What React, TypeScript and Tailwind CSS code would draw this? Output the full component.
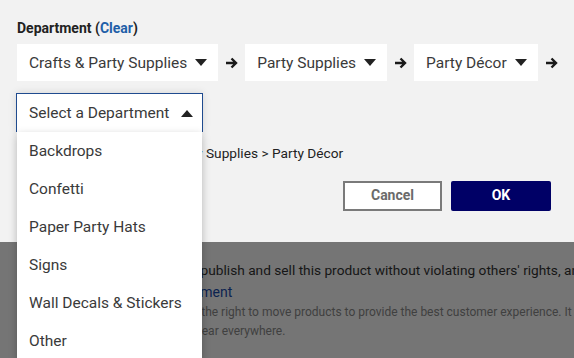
const rowSelects = ["Crafts & Party Supplies", "Party Supplies", "Party Décor"];

const options = [
  "Backdrops",
  "Confetti",
  "Paper Party Hats",
  "Signs",
  "Wall Decals & Stickers",
  "Other",
];

function Caret({ up = false }: { up?: boolean }) {
  return (
    <svg width="12" height="7" viewBox="0 0 12 7" className="shrink-0">
      {up ? (
        <path d="M0 7 L6 0 L12 7 Z" fill="#222" />
      ) : (
        <path d="M0 0 L12 0 L6 7 Z" fill="#222" />
      )}
    </svg>
  );
}

function Arrow() {
  return (
    <svg width="13" height="12" viewBox="0 0 13 12" className="shrink-0">
      <path
        d="M1 6 H11 M6.5 1.5 L11 6 L6.5 10.5"
        stroke="#1a1a1a"
        strokeWidth="2.4"
        fill="none"
      />
    </svg>
  );
}

export default function App() {
  return (
    <div className="relative h-[358px] w-[574px] overflow-hidden bg-[#757575] font-['Roboto',sans-serif]">
      <div className="h-[242px] bg-[#f2f2f2] px-[17px] pt-[19px]">
        <p className="text-[14px] font-bold leading-[18px] text-[#222]">
          Department (<span className="text-[#1f5fa8]">Clear</span>)
        </p>

        <div className="mt-[7px] flex items-center gap-[7px]">
          {rowSelects.map((label) => (
            <div key={label} className="flex items-center gap-[7px]">
              <div className="flex h-[37px] items-center gap-[8px] bg-white pl-[12px] pr-[11px] text-[15.5px] text-[#3a3a3a]">
                <span className="whitespace-nowrap pt-[2px]">{label}</span>
                <Caret />
              </div>
              <Arrow />
            </div>
          ))}
        </div>

        <div className="relative mt-[12px] w-[187px] -ml-px">
          <div className="flex h-[39px] items-center justify-between border border-b-0 border-[#1f4b8f] bg-white pl-[12px] pr-[9px] text-[15.5px] text-[#3a3a3a] shadow-[0_0_8px_rgba(0,0,0,0.12)]">
            <span className="whitespace-nowrap pt-[2px]">Select a Department</span>
            <Caret up />
          </div>

          <ul className="absolute left-px top-full z-10 w-[185px] bg-white shadow-[0_3px_8px_rgba(0,0,0,0.25)]">
            {options.map((option) => (
              <li
                key={option}
                className="flex h-[38px] items-center px-[12px] pt-[2px] text-[15.5px] whitespace-nowrap text-[#3a3a3a]"
              >
                {option}
              </li>
            ))}
          </ul>
        </div>

        <p className="mt-[11px] whitespace-nowrap text-[13.7px] text-[#222]">
          Crafts &amp; Party Supplies &gt; Party Supplies &gt; Party Décor
        </p>

        <div className="mt-[17px] flex justify-end gap-[9px] pr-[6px]">
          <button
            type="button"
            className="h-[30px] w-[99px] border-2 border-[#7a7a7a] bg-white text-[14px] font-bold text-[#6b6b6b]"
          >
            Cancel
          </button>
          <button
            type="button"
            className="h-[30px] w-[100px] rounded-[2px] bg-[#000066] text-[14px] font-bold text-white"
          >
            OK
          </button>
        </div>
      </div>

      <div className="pl-[21px] pt-[18px]">
        <p className="whitespace-nowrap text-[13.7px] leading-[20px] text-[#161616]">
          I confirm we have the right to publish and sell this product without violating others' rights, and
        </p>
        <p className="mt-[3px] whitespace-nowrap text-[14px] leading-[18px] text-[#0c2350]">
          Read the User Content Agreement
        </p>
        <p className="mt-[2px] whitespace-nowrap text-[12px] leading-[19px] text-[#404040]">
          Please note that our staff reserve the right to move products to provide the best customer experience. It
        </p>
        <p className="whitespace-nowrap text-[12px] leading-[19px] text-[#404040]">
          As such, this product may not appear everywhere.
        </p>
      </div>
    </div>
  );
}
